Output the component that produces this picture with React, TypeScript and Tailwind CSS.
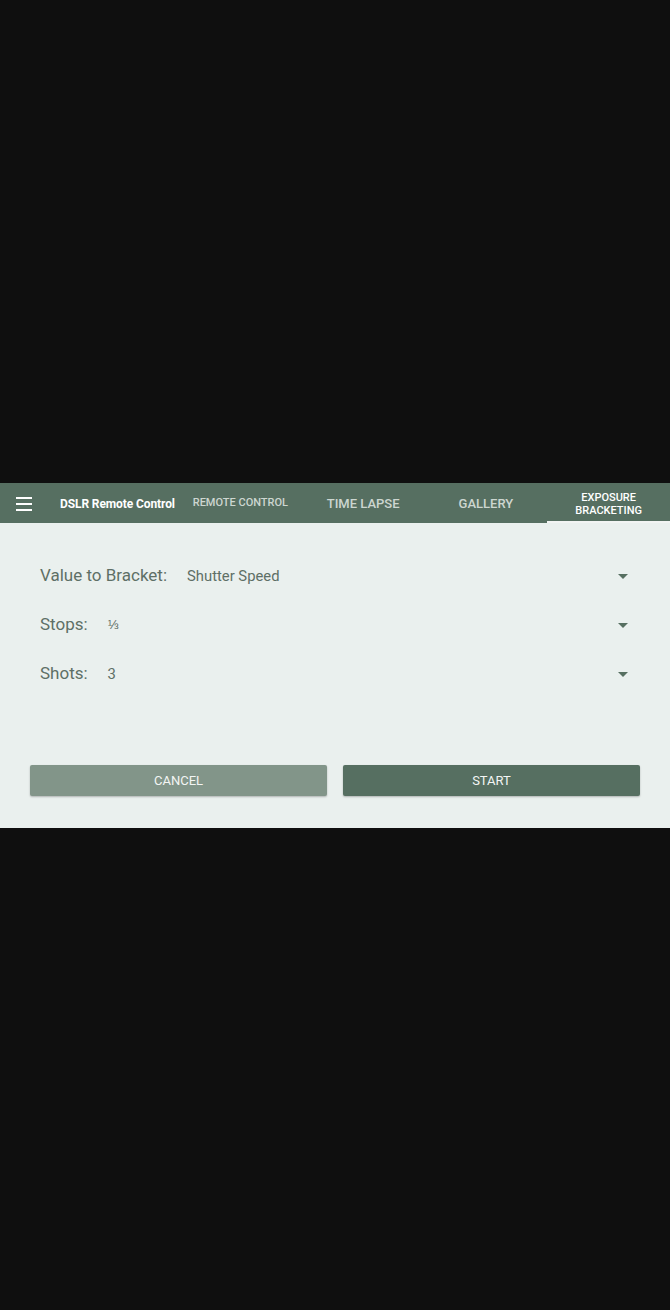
import { useState } from "react";

const tabs = [
  { label: "REMOTE CONTROL", size: "text-[11px]" },
  { label: "TIME LAPSE", size: "text-[13px]" },
  { label: "GALLERY", size: "text-[13px]" },
  { label: "EXPOSURE BRACKETING", size: "text-[11px] leading-[13px] w-[80px]" },
];

function Caret() {
  return (
    <svg width="10" height="5" viewBox="0 0 10 5" className="text-[#566f61]">
      <path d="M0 0h10L5 5z" fill="currentColor" />
    </svg>
  );
}

function Row({ label, value, valueSize }: { label: string; value: string; valueSize: string }) {
  return (
    <div className="flex h-[49px] items-center pl-10 pr-[42px] pt-[1px]">
      <span className="text-[17px] text-[#5e6f66]">{label}</span>
      <span className={`ml-5 ${valueSize} text-[#5e6f66]`}>{value}</span>
      <span className="ml-auto flex">
        <Caret />
      </span>
    </div>
  );
}

export default function App() {
  const [active] = useState(3);

  return (
    <div className="flex h-[1310px] w-[670px] flex-col bg-[#0f0f0f] font-['Roboto',sans-serif]">
      <div className="h-[483px]" />

      <header className="flex h-[40px] items-stretch bg-[#566f61] pt-[1px] text-white">
        <div className="flex w-[179px] items-center">
          <div className="ml-4 flex w-4 flex-col gap-[4px]">
            <span className="h-[2px] bg-white" />
            <span className="h-[2px] bg-white" />
            <span className="h-[2px] bg-white" />
          </div>
          <span className="ml-7 text-[12px] font-bold tracking-[-0.1px]">DSLR Remote Control</span>
        </div>
        {tabs.map((t, i) => (
          <div
            key={t.label}
            className={`relative flex flex-1 items-center justify-center text-center font-medium ${t.size} ${
              i === active ? "text-white" : "text-[#cdd6d0]"
            }`}
          >
            {t.label}
            {i === active && <span className="absolute inset-x-0 bottom-0 h-[2px] bg-[#f2f4f3]" />}
          </div>
        ))}
      </header>

      <main className="flex h-[305px] flex-col bg-[#eaf0ee] pt-[28px]">
        <Row label="Value to Bracket:" value="Shutter Speed" valueSize="text-[14.8px]" />
        <Row label="Stops:" value="⅓" valueSize="text-[13px]" />
        <Row label="Shots:" value="3" valueSize="text-[14.8px]" />

        <div className="mt-[67px] flex gap-4 px-[30px]">
          <button className="h-[31px] flex-1 rounded-[2px] bg-[#829589] pt-[1px] text-[13px] font-normal text-[#f3f5f4] shadow-[0_1px_2px_rgba(0,0,0,0.25)]">
            CANCEL
          </button>
          <button className="h-[31px] flex-1 rounded-[2px] bg-[#566f61] pt-[1px] text-[13px] font-normal text-[#f3f5f4] shadow-[0_1px_2px_rgba(0,0,0,0.25)]">
            START
          </button>
        </div>
      </main>

      <div className="flex-1" />
    </div>
  );
}
